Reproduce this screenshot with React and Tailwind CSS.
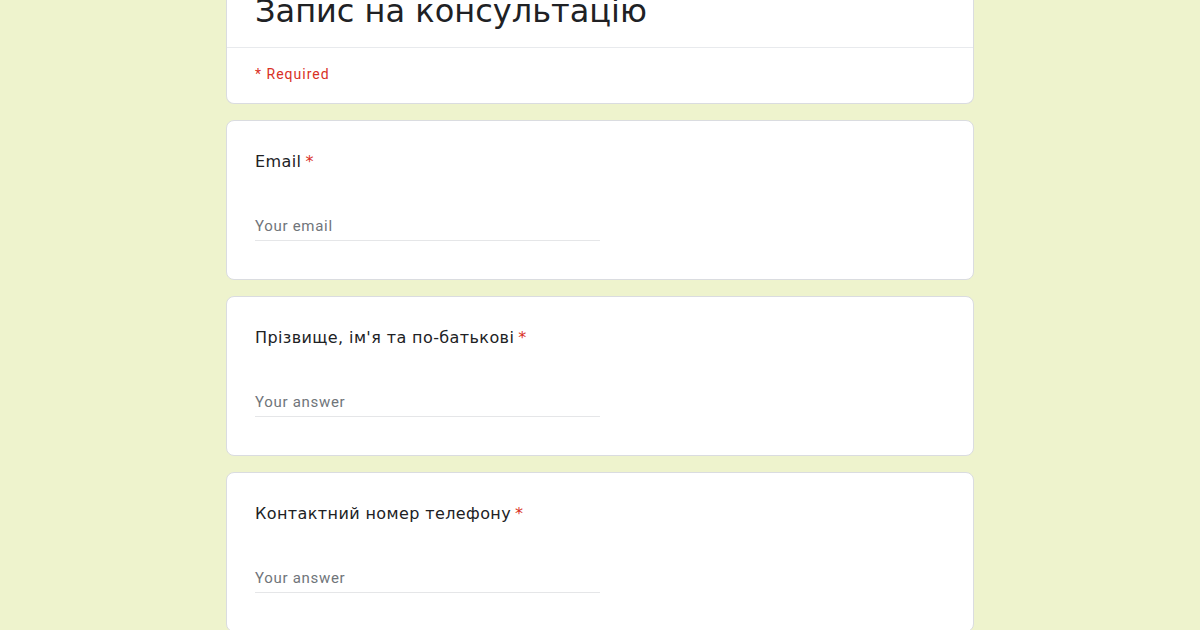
import React from 'react'

const fields = [
  { label: 'Email', placeholder: 'Your email' },
  { label: "Прізвище, ім'я та по-батькові", placeholder: 'Your answer' },
  { label: 'Контактний номер телефону', placeholder: 'Your answer' },
]

function Question({ label, placeholder }) {
  return (
    <div className="rounded-lg border border-[#dadce0] bg-white px-7 pt-[29px] pb-[38px]">
      <div className="text-[16px] leading-[24px] tracking-[0.4px] text-[#202124]" style={{ fontFamily: '"DejaVu Sans", sans-serif' }}>
        {label}
        <span className="ml-1 text-[#d93025]">*</span>
      </div>
      <div className="mt-10 h-[27px] w-1/2 border-b border-[#e5e6e8]">
        <span className="text-[15px] leading-[24px] tracking-[0.7px] text-[#70757a]">{placeholder}</span>
      </div>
    </div>
  )
}

export default function App() {
  return (
    <div className="h-[630px] overflow-hidden bg-[#eef3cd]" style={{ fontFamily: 'Roboto, Arial, sans-serif' }}>
      <div className="mx-auto -mt-[9px] flex w-[748px] flex-col gap-4">
        <div className="rounded-b-lg border border-t-0 border-[#dadce0] bg-white">
          <div className="px-7 pb-[16px] text-[32px] leading-[40px] text-[#202124]" style={{ fontFamily: '"DejaVu Sans", sans-serif' }}>
            Запис на консультацію
          </div>
          <div className="border-t border-[#e8eaed] px-7 pt-4 pb-[19px] text-[14px] leading-[20px] tracking-[1px] text-[#d93025]">
            * Required
          </div>
        </div>
        {fields.map((f) => (
          <Question key={f.label} label={f.label} placeholder={f.placeholder} />
        ))}
      </div>
    </div>
  )
}
